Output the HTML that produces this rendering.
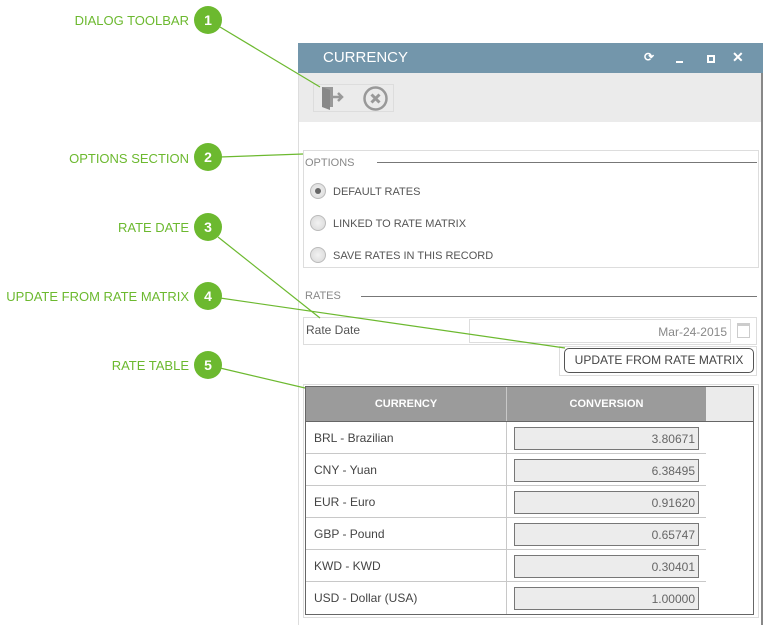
<!DOCTYPE html>
<html><head><meta charset="utf-8"><style>
*{margin:0;padding:0;box-sizing:border-box}
body{width:766px;height:625px;background:#fff;font-family:"Liberation Sans",sans-serif;position:relative;overflow:hidden}
.a{position:absolute}
.lbl{position:absolute;color:#6cb92f;font-size:13px;text-align:right;right:577px;white-space:nowrap}
.c{position:absolute;width:28px;height:28px;border-radius:50%;background:#6cb92f;color:#fff;font-weight:bold;font-size:14px;text-align:center;line-height:28px}
.sm{font-size:11px;color:#555}
.radio{position:absolute;width:16px;height:16px;border-radius:50%;border:1px solid #bbb;background:radial-gradient(#f2f2f2,#d8d8d8)}
.row{position:absolute;left:306px;width:400px;height:32px;border-bottom:1px solid #c8c8c8;font-size:12px;color:#444}
.row span{position:absolute;left:8px;top:9px}
.row i{position:absolute;left:208px;top:5px;width:185px;height:23px;border:1px solid #777;background:#ececec;font-style:normal;text-align:right;padding:4px 3px 0 0;color:#666}
</style></head><body>
<div class="a" style="left:298px;top:43px;width:465px;height:582px;border-left:1px solid #ddd;border-right:2px solid #888"></div>
<div class="a" style="left:298px;top:43px;width:465px;height:30px;background:#7396ab"></div>
<div class="a" style="left:323px;top:49px;color:#fff;font-size:15px">CURRENCY</div>
<div class="a" style="left:644px;top:50px;color:#fff;font-size:12px;font-weight:bold">⟳</div>
<div class="a" style="left:676px;top:61px;width:7px;height:2px;background:#fff"></div>
<div class="a" style="left:707px;top:55px;width:8px;height:8px;border:2px solid #fff"></div>
<div class="a" style="left:732px;top:49px;color:#fff;font-size:14px;font-weight:bold">✕</div>
<div class="a" style="left:299px;top:73px;width:462px;height:49px;background:#ebebeb"></div>
<div class="a" style="left:313px;top:84px;width:81px;height:28px;border:1px solid #ddd"></div>
<svg class="a" style="left:320px;top:85px" width="28" height="26"><path d="M2 2h11v20H2z" fill="#999"/><path d="M2 2l8 3v20l-8-3z" fill="#888"/><path d="M13 12h8M18 8l4 4-4 4" stroke="#999" stroke-width="2.5" fill="none"/></svg>
<svg class="a" style="left:362px;top:85px" width="27" height="27"><circle cx="13.5" cy="13.5" r="11" stroke="#999" stroke-width="2.5" fill="none"/><path d="M9.5 9.5l8 8M17.5 9.5l-8 8" stroke="#999" stroke-width="3"/></svg>
<div class="a" style="left:303px;top:150px;width:456px;height:118px;border:1px solid #ddd"></div>
<div class="a sm" style="left:305px;top:157px;color:#888">OPTIONS</div>
<div class="a" style="left:377px;top:162px;width:380px;height:1px;background:#777"></div>
<div class="radio" style="left:310px;top:183px"></div><div class="a" style="left:315px;top:188px;width:6px;height:6px;border-radius:50%;background:#666"></div>
<div class="a sm" style="left:333px;top:186px">DEFAULT RATES</div>
<div class="radio" style="left:310px;top:215px"></div><div class="a sm" style="left:333px;top:218px">LINKED TO RATE MATRIX</div>
<div class="radio" style="left:310px;top:247px"></div><div class="a sm" style="left:333px;top:250px">SAVE RATES IN THIS RECORD</div>
<div class="a sm" style="left:305px;top:290px;color:#888">RATES</div>
<div class="a" style="left:361px;top:296px;width:396px;height:1px;background:#777"></div>
<div class="a" style="left:303px;top:317px;width:454px;height:28px;border:1px solid #ddd"></div>
<div class="a" style="left:306px;top:323px;font-size:12px;color:#555">Rate Date</div>
<div class="a" style="left:469px;top:319px;width:262px;height:24px;border:1px solid #ddd;text-align:right;font-size:12px;color:#888;padding:5px 3px 0 0">Mar-24-2015</div>
<div class="a" style="left:737px;top:323px;width:13px;height:15px;border:1px solid #ccc;border-top:3px solid #ccc"></div>
<div class="a" style="left:559px;top:346px;width:198px;height:30px;border:1px solid #ddd"></div>
<div class="a" style="left:564px;top:348px;width:190px;height:25px;border:1px solid #555;border-radius:5px;font-size:12px;color:#444;text-align:center;line-height:23px">UPDATE FROM RATE MATRIX</div>
<div class="a" style="left:303px;top:384px;width:456px;height:234px;border:1px solid #ddd"></div>
<div class="a" style="left:305px;top:386px;width:449px;height:229px;border:1px solid #666"></div>
<div class="a" style="left:306px;top:387px;width:400px;height:34px;background:#9b9b9b"></div>
<div class="a" style="left:706px;top:387px;width:47px;height:34px;background:#ebebeb"></div>
<div class="a" style="left:506px;top:387px;width:1px;height:227px;background:#c8c8c8"></div>
<div class="a" style="left:306px;top:398px;width:200px;text-align:center;color:#fff;font-size:11px;font-weight:bold">CURRENCY</div>
<div class="a" style="left:507px;top:398px;width:199px;text-align:center;color:#fff;font-size:11px;font-weight:bold">CONVERSION</div>
<div class="a" style="left:306px;top:421px;width:447px;height:1px;background:#666"></div>
<div class="row" style="top:422px"><span>BRL - Brazilian</span><i>3.80671</i></div>
<div class="row" style="top:454px"><span>CNY - Yuan</span><i>6.38495</i></div>
<div class="row" style="top:486px"><span>EUR - Euro</span><i>0.91620</i></div>
<div class="row" style="top:518px"><span>GBP - Pound</span><i>0.65747</i></div>
<div class="row" style="top:550px"><span>KWD - KWD</span><i>0.30401</i></div>
<div class="row" style="top:582px;border-bottom:none"><span>USD - Dollar (USA)</span><i>1.00000</i></div>
<svg class="a" style="left:0;top:0" width="766" height="625"><g stroke="#6cb92f" stroke-width="1.2"><line x1="220" y1="27" x2="320" y2="87"/><line x1="220" y1="157" x2="303" y2="154"/><line x1="218" y1="237" x2="320" y2="318"/><line x1="220" y1="298" x2="565" y2="348"/><line x1="220" y1="368" x2="305" y2="388"/></g></svg>
<div class="lbl" style="top:13px">DIALOG TOOLBAR</div><div class="c" style="left:194px;top:6px">1</div>
<div class="lbl" style="top:151px">OPTIONS SECTION</div><div class="c" style="left:194px;top:143px">2</div>
<div class="lbl" style="top:220px">RATE DATE</div><div class="c" style="left:194px;top:213px">3</div>
<div class="lbl" style="top:289px">UPDATE FROM RATE MATRIX</div><div class="c" style="left:194px;top:282px">4</div>
<div class="lbl" style="top:358px">RATE TABLE</div><div class="c" style="left:194px;top:351px">5</div>
</body></html>
